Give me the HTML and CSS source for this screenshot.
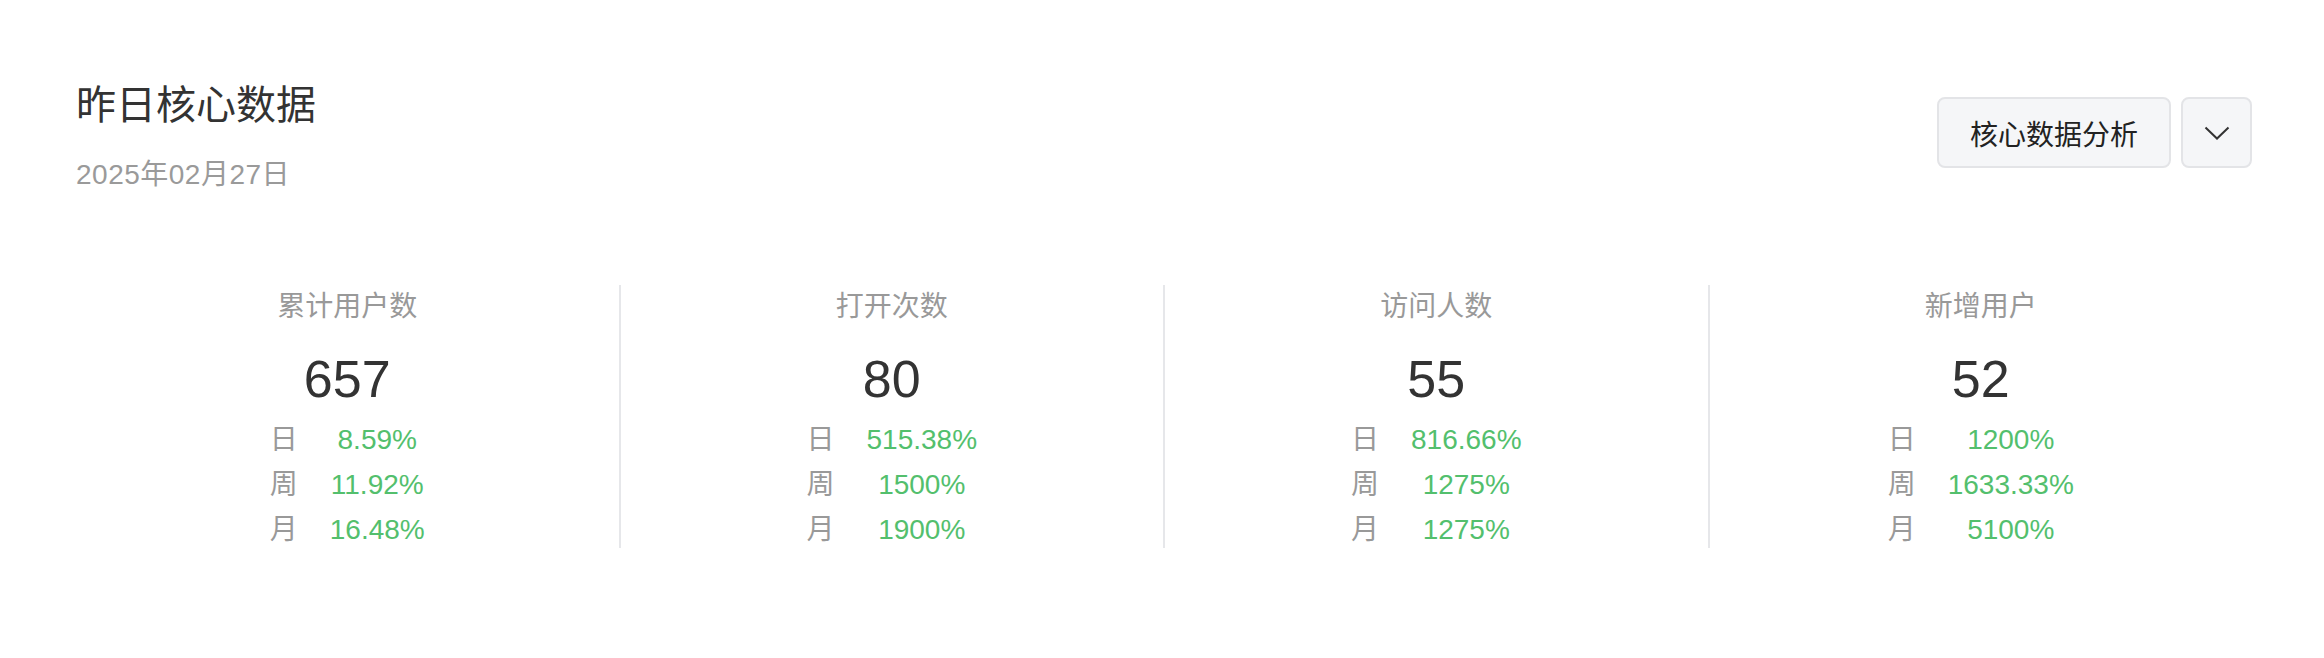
FILE: index.html
```html
<!DOCTYPE html>
<html lang="zh-CN">
<head>
<meta charset="utf-8">
<title>昨日核心数据</title>
<link rel="stylesheet" href="styles.css">
</head>
<body>
<div class="page">
  <header class="header">
    <div class="heading">
      <h1 class="title">昨日核心数据</h1>
      <div class="date">2025年02月27日</div>
    </div>
    <div class="actions">
      <button class="btn">核心数据分析</button>
      <button class="btn btn-icon" aria-label="更多">
        <svg class="chevron" width="26" height="14" viewBox="0 0 26 14"><path d="M1.5 1.5 L13 12.5 L24.5 1.5" fill="none" stroke="#333" stroke-width="2"/></svg>
      </button>
    </div>
  </header>

  <section class="stats">
    <div class="stat">
      <div class="stat-label">累计用户数</div>
      <div class="stat-value">657</div>
      <table class="rates">
        <tr><td class="k">日</td><td class="v">8.59%</td></tr>
        <tr><td class="k">周</td><td class="v">11.92%</td></tr>
        <tr><td class="k">月</td><td class="v">16.48%</td></tr>
      </table>
    </div>
    <div class="stat">
      <div class="stat-label">打开次数</div>
      <div class="stat-value">80</div>
      <table class="rates">
        <tr><td class="k">日</td><td class="v">515.38%</td></tr>
        <tr><td class="k">周</td><td class="v">1500%</td></tr>
        <tr><td class="k">月</td><td class="v">1900%</td></tr>
      </table>
    </div>
    <div class="stat">
      <div class="stat-label">访问人数</div>
      <div class="stat-value">55</div>
      <table class="rates">
        <tr><td class="k">日</td><td class="v">816.66%</td></tr>
        <tr><td class="k">周</td><td class="v">1275%</td></tr>
        <tr><td class="k">月</td><td class="v">1275%</td></tr>
      </table>
    </div>
    <div class="stat">
      <div class="stat-label">新增用户</div>
      <div class="stat-value">52</div>
      <table class="rates">
        <tr><td class="k">日</td><td class="v">1200%</td></tr>
        <tr><td class="k">周</td><td class="v">1633.33%</td></tr>
        <tr><td class="k">月</td><td class="v">5100%</td></tr>
      </table>
    </div>
  </section>
</div>
</body>
</html>
```

FILE: styles.css
```css
html, body {
  margin: 0;
  padding: 0;
  background: #ffffff;
}

body {
  font-family: "Liberation Sans", "Noto Sans CJK SC", sans-serif;
  color: #333333;
}

.page {
  padding: 77px 72px 0 76px;
}

.header {
  display: flex;
  justify-content: space-between;
  align-items: flex-start;
}

.title {
  margin: 0;
  font-size: 40px;
  line-height: 56px;
  font-weight: normal;
  color: #333333;
}

.date {
  margin-top: 22px;
  font-size: 28px;
  line-height: 40px;
  letter-spacing: 0.5px;
  color: #9a9a9a;
}

.actions {
  display: flex;
  gap: 10px;
  margin-top: 20px;
}

.btn {
  box-sizing: border-box;
  height: 71px;
  padding: 0 31px;
  border: 2px solid #e3e4e7;
  border-radius: 8px;
  background: #f5f6f8;
  font-family: "Liberation Sans", "Noto Sans CJK SC", sans-serif;
  font-size: 28px;
  color: #222222;
  display: flex;
  align-items: center;
  justify-content: center;
}

.btn-icon {
  width: 71px;
  padding: 0;
}

.chevron {
  display: block;
}

.stats {
  display: flex;
  margin-top: 90px;
}

.stat {
  flex: 1 1 0;
  height: 263px;
  display: flex;
  flex-direction: column;
  align-items: center;
}

.stat + .stat {
  border-left: 2px solid #e6e7ea;
}

.stat-label {
  font-size: 28px;
  line-height: 44px;
  color: #999999;
}

.stat-value {
  margin-top: 12px;
  font-size: 52px;
  line-height: 76px;
  color: #333333;
}

.rates {
  border-collapse: collapse;
  font-size: 28px;
}

.rates td {
  padding: 0 16px;
  height: 45px;
  line-height: 45px;
  text-align: center;
}

.rates .k {
  color: #999999;
}

.rates .v {
  color: #53bf6d;
}
```
